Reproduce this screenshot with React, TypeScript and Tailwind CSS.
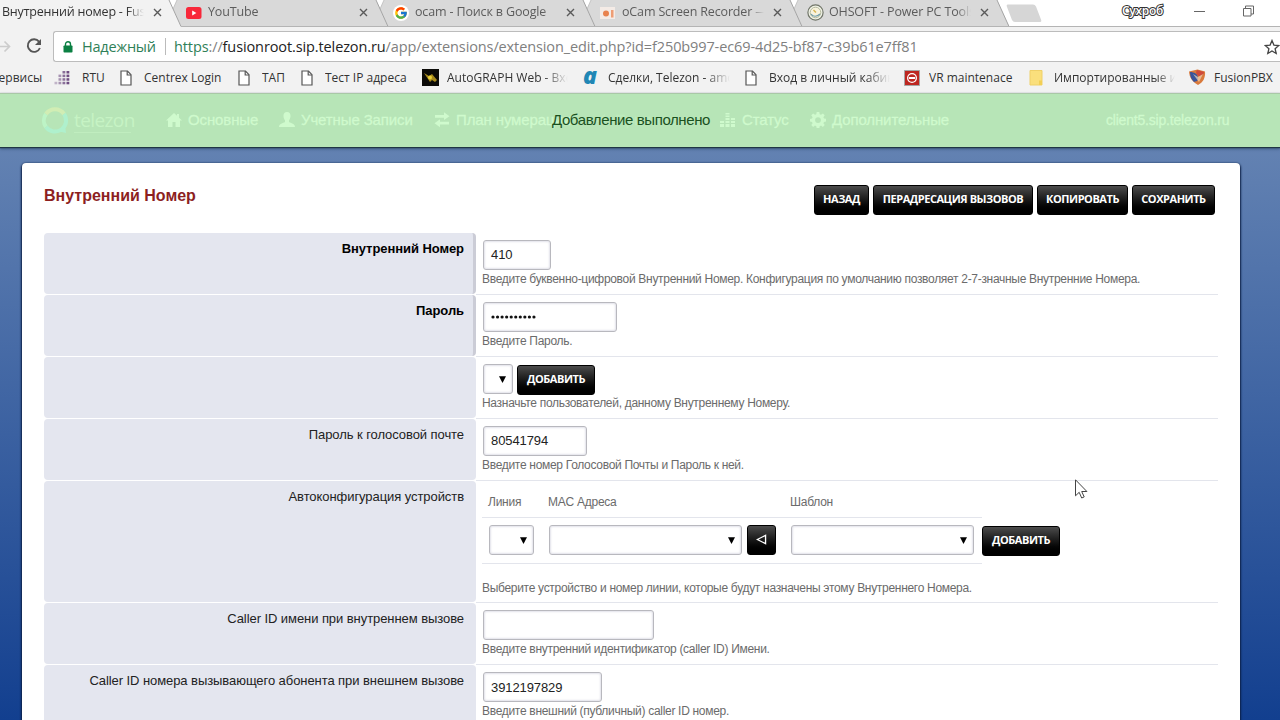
import type { ReactNode } from "react";
import clsx from "clsx";
import { FcGoogle } from "react-icons/fc";

const UI = "font-['Open_Sans','Noto_Sans',sans-serif]";

function CloseIcon() {
  return (
    <svg width="9" height="9" viewBox="0 0 9 9" className="shrink-0">
      <path d="M1 1l7 7M8 1l-7 7" stroke="#5a5a5a" strokeWidth="1.4" />
    </svg>
  );
}

function PageIcon() {
  return (
    <svg width="12" height="16" viewBox="0 0 12 16" className="ml-px shrink-0">
      <path d="M1 1h6.5L11 4.7V15H1z" fill="#fff" stroke="#555" strokeWidth="1.2" />
      <path d="M7.2 1v4H11" fill="none" stroke="#555" strokeWidth="1.2" />
    </svg>
  );
}

function YoutubeIcon() {
  return (
    <svg width="16" height="16" viewBox="0 0 16 16">
      <rect x="0" y="2" width="15.5" height="12" rx="2.5" fill="#f8283a" />
      <path d="M6.2 5.6L10.4 8l-4.2 2.4z" fill="#fff" />
    </svg>
  );
}

function OcamIcon() {
  return (
    <svg width="16" height="16" viewBox="0 0 16 16">
      <rect x="0" y="2" width="15" height="12" fill="#f4ebe6" />
      <circle cx="6" cy="8.5" r="3" fill="#e8824e" />
      <path d="M11 5h2.5v7.5H11z" fill="#ee9d74" />
    </svg>
  );
}

function OhsoftIcon() {
  return (
    <svg width="17" height="17" viewBox="0 0 17 17">
      <circle cx="8.5" cy="8.5" r="7.6" fill="#f2f4e8" stroke="#707568" strokeWidth="1.2" />
      <circle cx="8.5" cy="8.5" r="5.3" fill="#f8f3dd" stroke="#b3b89c" />
      <path d="M4 10c2 3 6 3 9 0" fill="none" stroke="#6f9dab" strokeWidth="1.2" />
      <path d="M6.5 6l2.5 2.5" stroke="#d8b552" strokeWidth="1.5" />
    </svg>
  );
}

const tabs = [
  { icon: <YoutubeIcon />, title: "YouTube" },
  {
    icon: (
      <span className="flex size-4 items-center justify-center rounded-full bg-white">
        <FcGoogle size={14} />
      </span>
    ),
    title: "ocam - Поиск в Google",
  },
  { icon: <OcamIcon />, title: "oCam Screen Recorder —" },
  { icon: <OhsoftIcon />, title: "OHSOFT - Power PC Tools" },
];

function TabStrip() {
  return (
    <div className={clsx("relative flex h-[27px] bg-white text-[12.5px] text-[#5c5c5c]", UI)}>
      <svg width="1280" height="27" viewBox="0 0 1280 27" className="absolute inset-0">
        <path d="M0 0H169L181 26.5H1280V27H0z" fill="#f2f2f2" />
        {[0, 1, 2, 3].map((i) => (
          <g key={i} transform={`translate(${i * 207} 0)`}>
            <path d="M177 0H376L388 26H181L173 9z" fill="#d9d9d9" />
            <path d="M177 0L173 9" stroke="#bbb" strokeWidth="0.8" />
          </g>
        ))}
        {[0, 1, 2, 3, 4].map((i) => (
          <path key={i} d="M169 0L181 26.5" transform={`translate(${i * 207} 0)`} stroke="#a4a4a4" />
        ))}
        <path d="M181 26.5H1280" stroke="#b4b4b4" />
        <path d="M1008 4.5H1033q2 0 3 2l5 13q1 2.5-1 2.5H1015q-2 0-3-2l-5-13q-1-2.5 1-2.5z" fill="#d6d6d6" />
      </svg>
      <div className="relative flex w-[175px] items-center pb-[2px] pl-[2px] text-[#333]">
        <span className="w-[142px] overflow-hidden tracking-[-0.2px] whitespace-nowrap mask-r-from-88% mask-r-to-100%">
          Внутренний номер - Fusion
        </span>
        <span className="ml-[9px]">
          <CloseIcon />
        </span>
      </div>
      {tabs.map(({ icon, title }) => (
        <div key={title} className="relative flex w-[207px] items-center pb-[2px] pl-[11px]">
          <span className="w-[22px]">{icon}</span>
          <span className="mr-[9px] w-[142px] overflow-hidden tracking-[-0.15px] whitespace-nowrap mask-r-from-90% mask-r-to-100%">
            {title}
          </span>
          <CloseIcon />
        </div>
      ))}
      <div className="relative ml-[119px] flex items-center pb-[5px]">
        <span className="w-[72px] text-[12px] font-semibold tracking-[-0.3px] text-white [-webkit-text-stroke:2px_#333] [paint-order:stroke_fill]">
          Сухроб
        </span>
        <svg width="60" height="12" viewBox="0 0 60 12" fill="none" stroke="#666">
          <path d="M0 6.5h11M49.5 3.5h7.5v7.5h-7.5zM51.5 3.5v-2.5h8v8h-2.5" />
        </svg>
      </div>
    </div>
  );
}

function AddressBar() {
  return (
    <div className={clsx("flex h-[35px] bg-[#f2f2f2] pt-[4px] text-[14.5px]", UI)}>
      <svg width="53" height="30" viewBox="0 0 53 30" fill="none" className="shrink-0">
        <path d="M0 15.5h9M4.5 10.5l5 5-5 5" stroke="#ccc" strokeWidth="1.7" />
        <path d="M39 10.6a6.3 6.3 0 1 0 .9 6.4" stroke="#555" strokeWidth="1.9" />
        <path d="M41 8v6h-6z" fill="#555" />
      </svg>
      <div className="flex h-[31px] flex-1 items-center rounded-l-[3px] border border-r-0 border-[#bcbcbc] bg-white pl-[9px] whitespace-nowrap">
        <svg width="10" height="12" viewBox="0 0 10 12" className="shrink-0">
          <rect x="0.5" y="4.5" width="9" height="7" rx="0.8" fill="#0b8043" />
          <path d="M2.5 5V3.2a2.5 2.5 0 0 1 5 0V5" fill="none" stroke="#0b8043" strokeWidth="1.4" />
        </svg>
        <span className="ml-[9px] w-[83px] tracking-[-0.2px] text-[#2f8058]">Надежный</span>
        <span className="mr-[8px] h-[17px] w-px bg-[#bbb]" />
        <span className="w-[1090px] tracking-[-0.11px] text-[#808080]">
          <span className="text-[#2f8058]">https</span>://
          <span className="text-[#222]">fusionroot.sip.telezon.ru</span>
          /app/extensions/extension_edit.php?id=f250b997-ec69-4d25-bf87-c39b61e7ff81
        </span>
        <svg width="16" height="16" viewBox="0 0 16 16" className="shrink-0">
          <path
            d="M8 1.5l1.9 4.6 4.9.4-3.7 3.2 1.1 4.8L8 11.9l-4.2 2.6 1.1-4.8L1.2 6.5l4.9-.4z"
            fill="none"
            stroke="#444"
            strokeWidth="1.3"
          />
        </svg>
      </div>
    </div>
  );
}

const rtuDots = [
  [12, 0], [8, 0], [4, 3.6], [8, 3.6], [12, 3.6], [4, 7.2], [8, 7.2], [12, 7.2],
  [0, 10.8], [4, 10.8], [8, 10.8], [12, 10.8],
];

function RtuIcon() {
  return (
    <svg width="17" height="14" viewBox="0 0 16 14" fill="#67437b" className="-ml-[3px]">
      {rtuDots.map(([x, y]) => (
        <rect key={`${x}-${y}`} x={x} y={y} width="2.8" height="2.5" opacity={0.35 + x / 20} />
      ))}
    </svg>
  );
}

const bookmarks = [
  { icon: null, title: "Сервисы", box: "w-[66px] -ml-[9px]", label: "w-[60px]" },
  { icon: <RtuIcon />, title: "RTU", box: "w-[62px]", label: "w-[36px]" },
  { icon: <PageIcon />, title: "Centrex Login", box: "w-[118px]", label: "w-[90px]" },
  { icon: <PageIcon />, title: "ТАП", box: "w-[63px]", label: "w-[38px]" },
  { icon: <PageIcon />, title: "Тест IP адреса", box: "w-[122px]", label: "w-[92px]" },
  {
    icon: (
      <svg width="17" height="17" viewBox="0 0 17 17">
        <path d="M0 0h17v17H0z" fill="#0c0b08" />
        <path d="M2 4l5 3 3-2 5 6-2 2-3-2-2 2-2-3z" fill="#a88b1c" />
        <circle cx="8" cy="8.5" r="2" fill="#e8d03a" />
      </svg>
    ),
    title: "AutoGRAPH Web - Вход",
    box: "w-[161px]",
    label: "w-[121px] mask-r-from-80% mask-r-to-100%",
  },
  {
    icon: (
      <span className="block -translate-y-[2px] text-[23px] leading-[17px] font-extrabold text-[#2187b5] italic">
        a
      </span>
    ),
    title: "Сделки, Telezon - amo",
    box: "w-[161px]",
    label: "w-[122px] mask-r-from-80% mask-r-to-100%",
  },
  {
    icon: <PageIcon />,
    title: "Вход в личный кабинет",
    box: "w-[160px]",
    label: "w-[121px] mask-r-from-80% mask-r-to-100%",
  },
  {
    icon: (
      <svg width="16" height="16" viewBox="0 0 16 16">
        <path d="M.5.5h15v15H.5z" fill="#bd2620" stroke="#a5a5a5" />
        <circle cx="8" cy="8" r="5" fill="#fff" />
        <circle cx="8" cy="8" r="3.7" fill="#bd2620" />
        <path d="M5 7h6v2H5z" fill="#fff" />
      </svg>
    ),
    title: "VR maintenace",
    box: "w-[125px]",
    label: "w-[92px]",
  },
  {
    icon: (
      <svg width="14" height="16" viewBox="0 0 14 16">
        <path d="M1 .5h12v14.5H1z" fill="#fadf7c" stroke="#efd068" />
        <path d="M10 10.5h3V15h-3z" fill="#f3cf55" />
      </svg>
    ),
    title: "Импортированные из",
    box: "w-[160px]",
    label: "w-[121px] mask-r-from-85% mask-r-to-100%",
  },
  {
    icon: (
      <svg width="17" height="17" viewBox="0 0 17 17">
        <path d="M0 2.5L8.5.5 16 2.5c.5 6-1.5 10.5-7 13.5C3.5 13 .5 9 0 2.5z" fill="#d97a3c" />
        <path d="M8 1l7 2c0 2.5-3 4-5 4S6 4 8 1z" fill="#cf4a3b" />
        <path d="M1 3c4 0 8 2 8 6s-2 3-4 4C2 10 1 7 1 3z" fill="#39549b" />
        <path d="M4 5l5 3 5-3-4 8z" fill="#f0d9b8" opacity=".7" />
      </svg>
    ),
    title: "FusionPBX",
    box: "w-[100px]",
    label: "w-[70px]",
  },
];

function BookmarksBar() {
  return (
    <div
      className={clsx(
        "flex h-[31px] overflow-hidden border-b border-[#e8e8e8] bg-[#f2f2f2] pt-px text-[12px] text-[#333]",
        UI,
      )}
    >
      {bookmarks.map(({ icon, title, box, label }) => (
        <div key={title} className={clsx("flex shrink-0 items-center", box)}>
          {icon && <span className="mr-[6px] flex w-[19px] shrink-0 justify-start">{icon}</span>}
          <span className={clsx("shrink-0 overflow-hidden whitespace-nowrap", label)}>{title}</span>
        </div>
      ))}
    </div>
  );
}

const menu = [
  {
    title: "Основные",
    box: "w-[113px]",
    icon: <path d="M8 1L0 8.5h2V15h4.5v-5h3v5H14V8.5h2L13 5.7V2h-2v1.8z" />,
  },
  {
    title: "Учетные Записи",
    box: "w-[155px]",
    icon: <path d="M8 0c2.5 0 3.8 1.8 3.5 4.5-.2 2-.9 3-1.5 3.8V10c2 1.2 6 1.6 6 5H0c0-3.4 4-3.8 6-5V8.3C5.4 7.5 4.7 6.5 4.5 4.5 4.2 1.8 5.5 0 8 0z" />,
  },
  {
    title: "План нумерации",
    box: "w-[159px]",
    icon: <path d="M1 3h9V.3L15.5 4.3 10 8V5.7H1zM15 9.8H6V7.3L.5 11.3 6 15.2v-2.6h9z" />,
  },
  {
    title: "Приложения",
    box: "w-[127px] opacity-25",
    icon: <path d="M2 6h4l6-4v12l-6-4H2z" />,
  },
  {
    title: "Статус",
    box: "w-[90px]",
    icon: <path d="M0 9h4v2H0zM0 12h4v3H0zM5.5 1h4v1.5h-4zM5.5 3.5h4V5h-4zM5.5 6h4v2h-4zM5.500 9h4v2h-4zM5.5 12h4v3h-4zM11 6h4v2h-4zM11 9h4v2h-4zM11 12h4v3h-4z" />,
  },
  {
    title: "Дополнительные",
    box: "w-[296px]",
    icon: (
      <path
        fillRule="evenodd"
        d="M6.7 0h2.6l.4 2.2 1.3.6 1.9-1.3 1.8 1.8-1.3 1.9.6 1.3 2.2.4v2.6l-2.2.4-.6 1.3 1.3 1.9-1.8 1.8-1.9-1.3-1.3.6-.4 2.2H6.7l-.4-2.2-1.3-.6-1.9 1.3-1.8-1.8 1.3-1.9L2 9.9l-2-.4V6.9l2-.4.6-1.3-1.3-1.9 1.8-1.8L5 2.8l1.3-.6zM8 5.2a2.9 2.9 0 1 0 0 5.8 2.9 2.9 0 0 0 0-5.8z"
      />
    ),
  },
];

function Header() {
  return (
    <header className="relative z-10 flex h-[54px] items-center border-t border-[#a9c8a7] bg-[#b7e5b7] text-[15px] tracking-[-0.12px] text-[#cffacd] shadow-[0_1px_1px_#1f3644,0_2px_3px_#3d5a80]">
      <div className="ml-[41px] flex w-[125px] items-center">
        <svg width="28" height="28" viewBox="0 0 28 28" fill="none" strokeWidth="4">
          <path d="M5 20A11 11 0 0 1 5 7" stroke="#bdf4c6" />
          <path d="M5 7A11 11 0 0 1 23 7" stroke="#d1edb4" />
          <path d="M23 7A11 11 0 0 1 5 20" stroke="#aff0cd" />
          <path d="M16 24l9 2-1-8z" fill="#aff0cd" />
        </svg>
        <div className="ml-[5px] flex flex-col pt-[3px]">
          <span className={clsx("text-[19px] leading-[17px] tracking-[-0.6px] text-[#c6f3c4]", UI)}>telezon</span>
          <span className="mt-[3px] h-px w-[57px] bg-[#c0edbf]" />
        </div>
      </div>
      {menu.map(({ title, box, icon }) => (
        <div key={title} className={clsx("flex shrink-0 items-center gap-[6px] whitespace-nowrap", box)}>
          <svg width="16" height="16" viewBox="0 0 16 16" fill="currentColor" className="shrink-0 -translate-y-px">
            {icon}
          </svg>
          <span className="[-webkit-text-stroke:0.3px_#cffacd]">{title}</span>
        </div>
      ))}
      <span className="text-[14px] tracking-[-0.2px] [-webkit-text-stroke:0.3px_#cffacd]">
        client5.sip.telezon.ru
      </span>
      <div className="absolute inset-x-0 top-[17px] pr-[18px] text-center text-[15px] leading-[18px] tracking-[-0.4px] text-[#1a511f]">
        Добавление выполнено
      </div>
    </header>
  );
}

function Button({ className, children }: { className?: string; children: ReactNode }) {
  return (
    <button
      className={clsx(
        "flex h-[30px] shrink-0 items-center justify-center rounded-[3px] border border-black bg-linear-to-b from-[#4d4d4d] to-black pb-px text-[11px] font-bold tracking-[-0.45px] whitespace-nowrap text-white",
        UI,
        className,
      )}
    >
      {children}
    </button>
  );
}

function Field({ className, children }: { className?: string; children?: ReactNode }) {
  return (
    <div
      className={clsx(
        "flex h-[30px] items-center rounded-[3px] border border-[#b8b8be] bg-white px-[7px] text-[13px] tracking-[-0.1px] text-[#222] shadow-[inset_0_0_2px_1px_#e2e2ea]",
        className,
      )}
    >
      {children}
    </div>
  );
}

function Select({ className }: { className?: string }) {
  return (
    <Field className={clsx("justify-end !px-[6px]", className)}>
      <svg width="7" height="7" viewBox="0 0 7 7">
        <path d="M0 .3h7L3.5 7z" fill="#000" />
      </svg>
    </Field>
  );
}

interface RowProps {
  label?: string;
  help: string;
  required?: boolean;
  tall?: boolean;
  children: ReactNode;
}

function Row({ label, help, required, tall, children }: RowProps) {
  return (
    <div className={clsx("flex", tall ? "h-[122.4px]" : "h-[62px]")}>
      <div
        className={clsx(
          "mb-px w-[432px] shrink-0 rounded-[4px] bg-[#e4e6ef] pt-[8px] text-right text-[13px] leading-[16px] tracking-[-0.07px]",
          required ? "border-r-[3px] border-[#cbccd6] pr-[9px] font-bold text-black" : "pr-[12px] text-[#222]",
        )}
      >
        {label}
      </div>
      <div className="flex flex-1 flex-col border-b border-[#e3e5ec] pl-[6px]">
        <div className={clsx(!tall && "flex gap-[4px] pt-[7px] pl-px")}>{children}</div>
        <div className={clsx("text-[12px] leading-[18px] tracking-[-0.3px] text-[#6b6b6b]", tall && "mt-[15px]")}>
          {help}
        </div>
      </div>
    </div>
  );
}

function DeviceTable() {
  return (
    <div className="flex">
      <div className="w-[500px]">
        <div className="flex h-[37px] items-center border-b border-[#e3e5ec] pt-[6px] pl-[6px] text-[12px] tracking-[-0.25px] text-[#6b6b6b]">
          <span className="w-[60px]">Линия</span>
          <span className="w-[242px]">MAC Адреса</span>
          <span>Шаблон</span>
        </div>
        <div className="flex h-[46px] items-center border-b border-[#e3e5ec] pb-px pl-[7px]">
          <Select className="mr-[15px] w-[45px]" />
          <Select className="mr-[5px] w-[193px]" />
          <Button className="mr-[15px] w-[29px]">
            <svg width="11" height="11" viewBox="0 0 10 10">
              <path d="M8.7 1.2v7.6L1.2 5z" fill="none" stroke="#fff" strokeWidth="1.2" />
            </svg>
          </Button>
          <Select className="w-[183px]" />
        </div>
      </div>
      <Button className="mt-[45px] w-[78px]">ДОБАВИТЬ</Button>
    </div>
  );
}

function Cursor() {
  return (
    <svg width="14" height="21" viewBox="0 0 14 21" className="absolute top-[479px] left-[1075px]">
      <path d="M.5.8v16l3.7-3.5 2.5 5.7 2.5-1.1-2.5-5.4h5.2z" fill="#fff" stroke="#444" />
    </svg>
  );
}

export default function App() {
  return (
    <div className="relative flex h-[720px] w-[1280px] flex-col overflow-hidden bg-white font-['Liberation_Sans',Arial,sans-serif]">
      <TabStrip />
      <AddressBar />
      <BookmarksBar />
      <Header />
      <main className="flex-1 overflow-hidden bg-linear-to-b from-[#6382b2] to-[#123f8f] px-[22px] pt-[16px]">
        <section className="h-[600px] w-[1218px] rounded-[4px] bg-white px-[22px] pt-[22px] shadow-[0_1px_2px_1px_#0b1f45]">
          <div className="flex h-[48px] justify-between pr-[3px]">
            <h1 className="text-[16px] leading-[22px] font-bold text-[#8d1f1f]">Внутренний Номер</h1>
            <div className="flex gap-[4px]">
              <Button className="w-[55px]">НАЗАД</Button>
              <Button className="w-[160px]">ПЕРАДРЕСАЦИЯ ВЫЗОВОВ</Button>
              <Button className="w-[91px]">КОПИРОВАТЬ</Button>
              <Button className="w-[83px]">СОХРАНИТЬ</Button>
            </div>
          </div>
          <Row
            label="Внутренний Номер"
            required
            help="Введите буквенно-цифровой Внутренний Номер. Конфигурация по умолчанию позволяет 2-7-значные Внутренние Номера."
          >
            <Field className="w-[68px]">410</Field>
          </Row>
          <Row label="Пароль" required help="Введите Пароль.">
            <Field className="w-[134px]">
              <svg width="46" height="5" viewBox="0 0 46 5">
                {Array.from({ length: 10 }, (_, i) => (
                  <circle key={i} cx={2 + i * 4.55} cy="2" r="1.6" fill="#111" />
                ))}
              </svg>
            </Field>
          </Row>
          <Row help="Назначьте пользователей, данному Внутреннему Номеру.">
            <Select className="w-[30px]" />
            <Button className="mt-px -mb-px w-[78px]">ДОБАВИТЬ</Button>
          </Row>
          <Row label="Пароль к голосовой почте" help="Введите номер Голосовой Почты и Пароль к ней.">
            <Field className="w-[104px]">80541794</Field>
          </Row>
          <Row
            label="Автоконфигурация устройств"
            tall
            help="Выберите устройство и номер линии, которые будут назначены этому Внутреннего Номера."
          >
            <DeviceTable />
          </Row>
          <Row
            label="Caller ID имени при внутреннем вызове"
            help="Введите внутренний идентификатор (caller ID) Имени."
          >
            <Field className="w-[171px]" />
          </Row>
          <Row
            label="Caller ID номера вызывающего абонента при внешнем вызове"
            help="Введите внешний (публичный) caller ID номер."
          >
            <Field className="w-[119px]">3912197829</Field>
          </Row>
        </section>
      </main>
      <Cursor />
    </div>
  );
}
